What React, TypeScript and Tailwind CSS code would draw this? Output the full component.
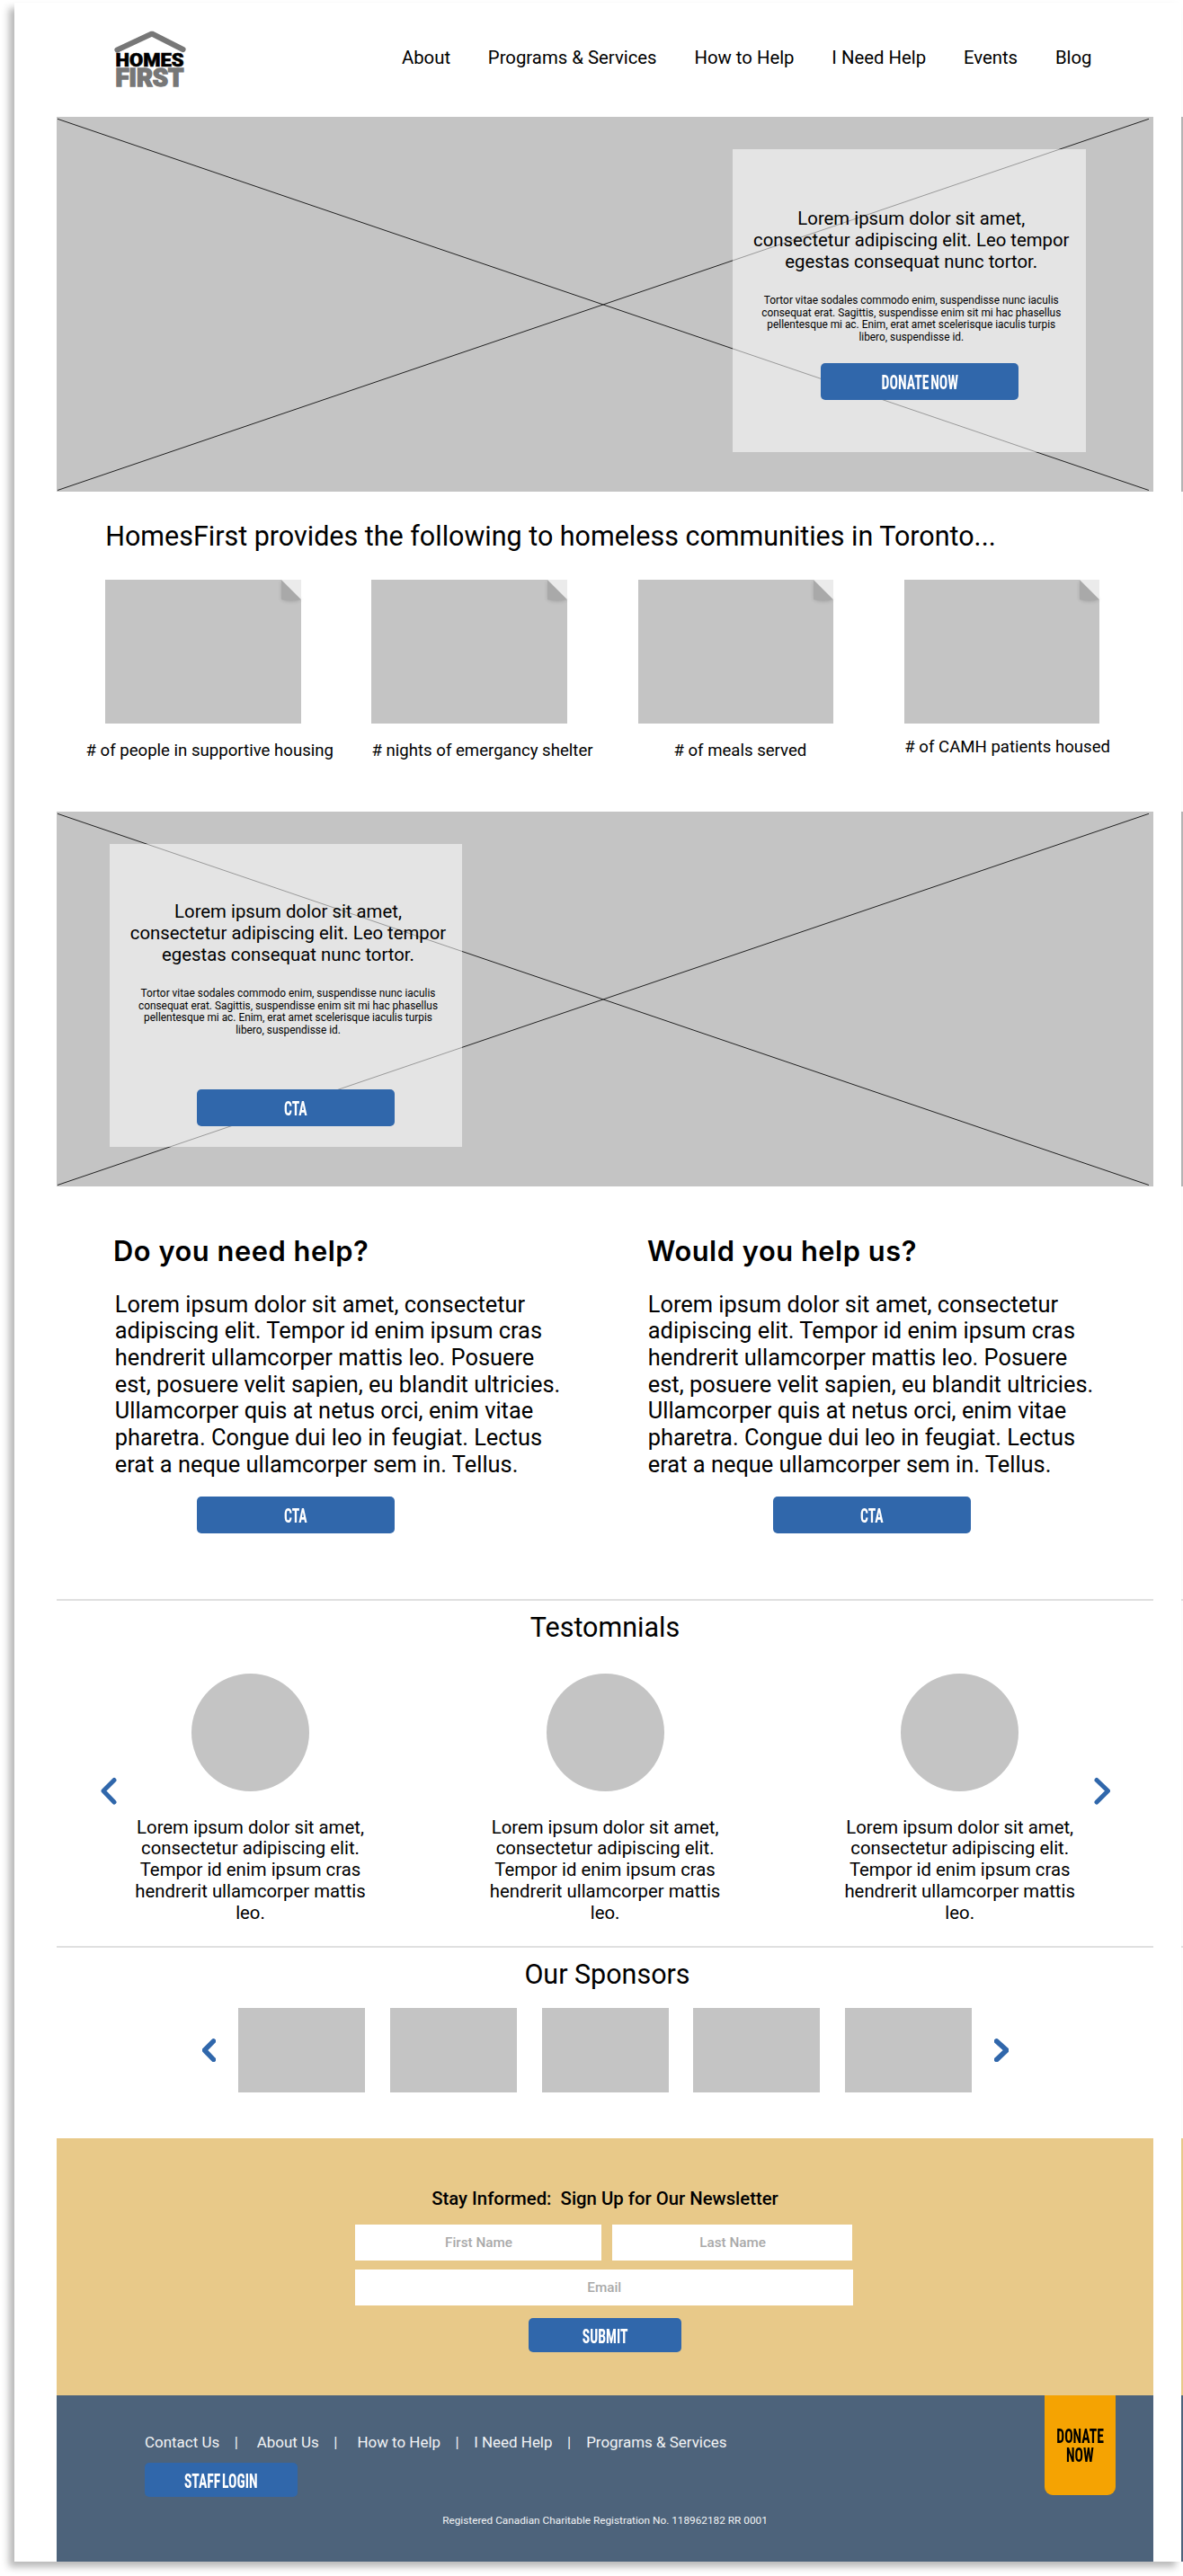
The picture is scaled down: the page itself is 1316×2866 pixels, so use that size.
import type { ReactNode } from "react";

const BODY = [
  "Lorem ipsum dolor sit amet, consectetur",
  "adipiscing elit. Tempor id enim ipsum cras",
  "hendrerit ullamcorper mattis leo. Posuere",
  "est, posuere velit sapien, eu blandit ultricies.",
  "Ullamcorper quis at netus orci, enim vitae",
  "pharetra. Congue dui leo in feugiat. Lectus",
  "erat a neque ullamcorper sem in. Tellus.",
];

const QUOTE = [
  "Lorem ipsum dolor sit amet,",
  "consectetur adipiscing elit.",
  "Tempor id enim ipsum cras",
  "hendrerit ullamcorper mattis",
  "leo.",
];

const CARD_TITLE = [
  "Lorem ipsum dolor sit amet,",
  "consectetur adipiscing elit. Leo tempor",
  "egestas consequat nunc tortor.",
];

const CARD_TEXT = [
  "Tortor vitae sodales commodo enim, suspendisse nunc iaculis",
  "consequat erat. Sagittis, suspendisse enim sit mi hac phasellus",
  "pellentesque mi ac. Enim, erat amet scelerisque iaculis turpis",
  "libero, suspendisse id.",
];

const NAV = ["About", "Programs & Services", "How to Help", "I Need Help", "Events", "Blog"];

const STATS = [
  { label: "# of people in supportive housing", pos: "mt-[19.2px] ml-[15px]" },
  { label: "# nights of emergancy shelter", pos: "mt-[19.2px] ml-[29px]" },
  { label: "# of meals served", pos: "mt-[19.2px] ml-[10px]" },
  { label: "# of CAMH patients housed", pos: "mt-[14.9px] ml-[12px]" },
];

const FOOTER_LINKS = [
  { label: "Contact Us", gap: "mr-[21px]" },
  { label: "About Us", gap: "mr-[22px]" },
  { label: "How to Help", gap: "mr-[16.5px]" },
  { label: "I Need Help", gap: "mr-[17px]" },
  { label: "Programs & Services", gap: "" },
];

function Lines({ lines }: { lines: string[] }) {
  return (
    <>
      {lines.map((line) => (
        <span key={line} className="block whitespace-nowrap">
          {line}
        </span>
      ))}
    </>
  );
}

function Condensed({ children }: { children: ReactNode }) {
  return (
    <span className="inline-block scale-x-[0.72] font-['Roboto_Condensed','Roboto',sans-serif] text-[21.8px] leading-[21.7px] font-bold whitespace-nowrap [word-spacing:-2.5px]">
      {children}
    </span>
  );
}

function Button({ children, className }: { children: ReactNode; className: string }) {
  return (
    <button
      className={`flex shrink-0 items-center justify-center rounded-[5px] bg-[#3067ab] pt-[3px] text-white ${className}`}
    >
      <Condensed>{children}</Condensed>
    </button>
  );
}

function Logo() {
  return (
    <svg className="h-[64px] w-[80px] overflow-visible" viewBox="0 0 80 64" aria-label="Homes First">
      <path d="M3.5 22.5 L42 4.5 L76.5 22" fill="none" stroke="#777" strokeWidth="6.2" strokeLinejoin="bevel" strokeLinecap="round" />
      <text x="1.5" y="62.5" className="font-['Roboto',sans-serif] text-[27px] font-black" fill="#777" stroke="#777" strokeWidth="1.4" textLength="76" lengthAdjust="spacingAndGlyphs">
        FIRST
      </text>
      <text x="1.5" y="41.2" className="font-['Roboto',sans-serif] text-[20.5px] font-black" fill="#000" stroke="#000" strokeWidth="0.6" textLength="76" lengthAdjust="spacingAndGlyphs">
        HOMES
      </text>
    </svg>
  );
}

function Banner({ children }: { children: ReactNode }) {
  return (
    <section className="relative h-[417px] bg-[#c4c4c4] pt-[36px]">
      <svg className="absolute inset-0 h-full w-full" viewBox="0 0 1220 417">
        <path d="M1 2.3 L1215 415.5 M1 415.5 L1215 2.3" stroke="#222" strokeWidth="1" fill="none" />
      </svg>
      {children}
    </section>
  );
}

function BannerText({ gap }: { gap: string }) {
  return (
    <div className="w-full pl-[5px] text-center">
      <h2 className="text-[20.33px] leading-[23.8px]">
        <Lines lines={CARD_TITLE} />
      </h2>
      <p className={`text-[11.86px] leading-[13.6px] ${gap}`}>
        <Lines lines={CARD_TEXT} />
      </p>
    </div>
  );
}

function FoldedTile() {
  return (
    <div className="flex h-[160px] w-full justify-end bg-[#c4c4c4]">
      <svg className="h-[24px] w-[22px] overflow-visible" viewBox="0 0 22 24">
        <path d="M0 2 L0 22 Q11 27 22 22 L3 3 Z" fill="#000" opacity="0.14" className="blur-[2px]" />
        <path d="M0 0 L0 22 Q11 25 22 22 Z" fill="#a9a9a9" />
        <path d="M0 0 H22 V22 Z" fill="#ebebeb" />
      </svg>
    </div>
  );
}

function Chevron({ dir, className }: { dir: "left" | "right"; className: string }) {
  return (
    <svg className={`shrink-0 ${className}`} viewBox="0 0 18 31" preserveAspectRatio="none" fill="none" stroke="#3067ab" strokeLinecap="round" strokeLinejoin="round">
      <path d={dir === "left" ? "M15 3.5 L3 15.5 L15 28" : "M3 3.5 L15.5 15.5 L3 28"} />
    </svg>
  );
}

function HelpColumn({ title, body, button }: { title: string; body: string; button: string }) {
  return (
    <div>
      <h2 className="font-['Inter',sans-serif] text-[30.8px] leading-[36px] font-semibold tracking-[0.55px]">{title}</h2>
      <p className={`mt-[26.6px] text-[25.4px] leading-[29.65px] ${body}`}>
        <Lines lines={BODY} />
      </p>
      <Button className={`mt-[20.8px] h-[41.5px] w-[219.5px] ${button}`}>CTA</Button>
    </div>
  );
}

function Field({ label, className }: { label: string; className: string }) {
  return (
    <div className={`flex h-[40.6px] items-center justify-center bg-white text-[15.25px] font-medium text-[#a9a9a9] ${className}`}>
      {label}
    </div>
  );
}

/* Left edge of the neighbouring board that follows this one. */
function NextBoard() {
  return (
    <div className="flex w-[2px] shrink-0 flex-col">
      <div className="mt-[130px] h-[417px] bg-[#b4b4b4]" />
      <div className="mt-[356px] h-[417px] bg-[#b4b4b4]" />
      <div className="mt-[459px] h-[2px] bg-[#e0e0e0]" />
      <div className="mt-[384px] h-[2px] bg-[#e0e0e0]" />
      <div className="mt-[212px] h-[285.5px] bg-[#e8c989]" />
      <div className="h-[185.5px] bg-[#4d637b]" />
    </div>
  );
}

export default function App() {
  return (
    <div className="flex h-[2866px] w-[1316px] overflow-hidden bg-white font-['Roboto',sans-serif] text-black">
      <div className="mt-[3px] ml-[16px] h-[2847px] w-[1298px] shrink-0 bg-white pl-[47px] shadow-[-6px_6px_8px_rgba(0,0,0,0.28)]">
        <div className="w-[1220px]">
          <header className="flex h-[127px] items-start justify-between pr-[68.5px] pl-[64px]">
            <div className="pt-[30px]">
              <Logo />
            </div>
            <nav className="flex gap-[41.8px] pt-[49px] text-[20.33px] leading-[24px]">
              {NAV.map((item) => (
                <a key={item}>{item}</a>
              ))}
            </nav>
          </header>

          <Banner>
            <div className="relative ml-[752px] h-[336.5px] w-[392.5px] bg-white/54 pt-[66.2px]">
              <BannerText gap="mt-[24.5px]" />
              <Button className="mt-[21.5px] ml-[98.2px] h-[41.5px] w-[219.5px]">DONATE NOW</Button>
            </div>
          </Banner>

          <section className="h-[356px] pt-[32px]">
            <h1 className="pl-[54.2px] text-[30.47px] leading-[36px]">
              HomesFirst provides the following to homeless communities in Toronto...
            </h1>
            <div className="mt-[29.8px] flex gap-[78.8px] pl-[54px]">
              {STATS.map((stat) => (
                <div key={stat.label} className="flex w-[217.5px] shrink-0 flex-col items-center">
                  <FoldedTile />
                  <span className={`text-[18.6px] leading-[22px] whitespace-nowrap ${stat.pos}`}>{stat.label}</span>
                </div>
              ))}
            </div>
          </section>

          <Banner>
            <div className="relative ml-[59px] h-[336.5px] w-[392px] bg-white/54 pt-[64.2px]">
              <BannerText gap="mt-[24.5px]" />
              <Button className="mt-[58.3px] ml-[97.3px] h-[41.5px] w-[219.5px]">CTA</Button>
            </div>
          </Banner>

          <section className="grid h-[459px] grid-cols-[594px_1fr] pt-[54px] pl-[63px]">
            <HelpColumn title="Do you need help?" body="pl-[1.8px]" button="ml-[93.3px]" />
            <HelpColumn title="Would you help us?" body="pl-[0.8px]" button="ml-[140px]" />
          </section>

          <section className="h-[386px] border-t-2 border-[#e0e0e0] pt-[12px]">
            <h2 className="text-center text-[30.47px] leading-[36px]">Testomnials</h2>
            <div className="mt-[33px] flex pl-[48.5px]">
              <Chevron dir="left" className="mt-[115px] mr-[19px] h-[31px] w-[18px] stroke-[5px]" />
              <div className="flex gap-[134.6px]">
                {[0, 1, 2].map((n) => (
                  <div key={n} className="flex w-[260px] flex-col items-center">
                    <div className="size-[131px] rounded-full bg-[#c4c4c4]" />
                    <p className="mt-[28.6px] text-center text-[20.33px] leading-[23.8px]">
                      <Lines lines={QUOTE} />
                    </p>
                  </div>
                ))}
              </div>
              <Chevron dir="right" className="mt-[115px] ml-[19.4px] h-[31px] w-[18px] stroke-[5px]" />
            </div>
          </section>

          <section className="h-[214px] border-t-2 border-[#e0e0e0] pt-[12px]">
            <h2 className="pl-[5px] text-center text-[30.47px] leading-[36px]">Our Sponsors</h2>
            <div className="mt-[19px] flex items-center pl-[162px]">
              <Chevron dir="left" className="mr-[25px] h-[26px] w-[15px] stroke-[6.5px]" />
              <div className="flex gap-[27.75px]">
                {[0, 1, 2, 3, 4].map((n) => (
                  <div key={n} className="h-[94px] w-[141px] bg-[#c4c4c4]" />
                ))}
              </div>
              <Chevron dir="right" className="ml-[25px] h-[26px] w-[16px] stroke-[6.5px]" />
            </div>
          </section>

          <section className="h-[285.5px] bg-[#e8c989] pt-[55px]">
            <h3 className="text-center text-[20.33px] leading-[24px] font-medium whitespace-pre">
              {"Stay Informed:  Sign Up for Our Newsletter"}
            </h3>
            <div className="mt-[16.7px] ml-[332px] flex w-[553.5px] flex-wrap gap-x-[11.8px] gap-y-[9.4px]">
              <Field label="First Name" className="w-[274px] pl-px" />
              <Field label="Last Name" className="w-[267.7px] pl-px" />
              <Field label="Email" className="w-full pl-px" />
            </div>
            <Button className="mt-[14.1px] ml-[525px] h-[37.5px] w-[169.5px]">SUBMIT</Button>
          </section>

          <footer className="relative h-[185.5px] bg-[#4d637b] pt-[42.3px] text-[#f1f3f5]">
            <nav className="flex pl-[98px] text-[16.94px] leading-[20px]">
              {FOOTER_LINKS.map((link, i) => (
                <span key={link.label} className="flex whitespace-nowrap">
                  <a>{link.label}</a>
                  {i < FOOTER_LINKS.length - 1 && <span className={`ml-[16.5px] ${link.gap}`}>|</span>}
                </span>
              ))}
            </nav>
            <Button className="mt-[13.7px] ml-[98px] h-[37.5px] w-[169.5px]">STAFF LOGIN</Button>
            <p className="mt-[19.5px] text-center text-[11.8px] leading-[14px]">
              Registered Canadian Charitable Registration No. 118962182 RR 0001
            </p>
            <div className="absolute top-0 right-[42px] flex h-[111px] w-[79px] flex-col items-center rounded-b-[9px] bg-[#f5a302] pt-[35px] text-black">
              <Condensed>DONATE</Condensed>
              <Condensed>NOW</Condensed>
            </div>
          </footer>
        </div>
      </div>
      <NextBoard />
    </div>
  );
}
